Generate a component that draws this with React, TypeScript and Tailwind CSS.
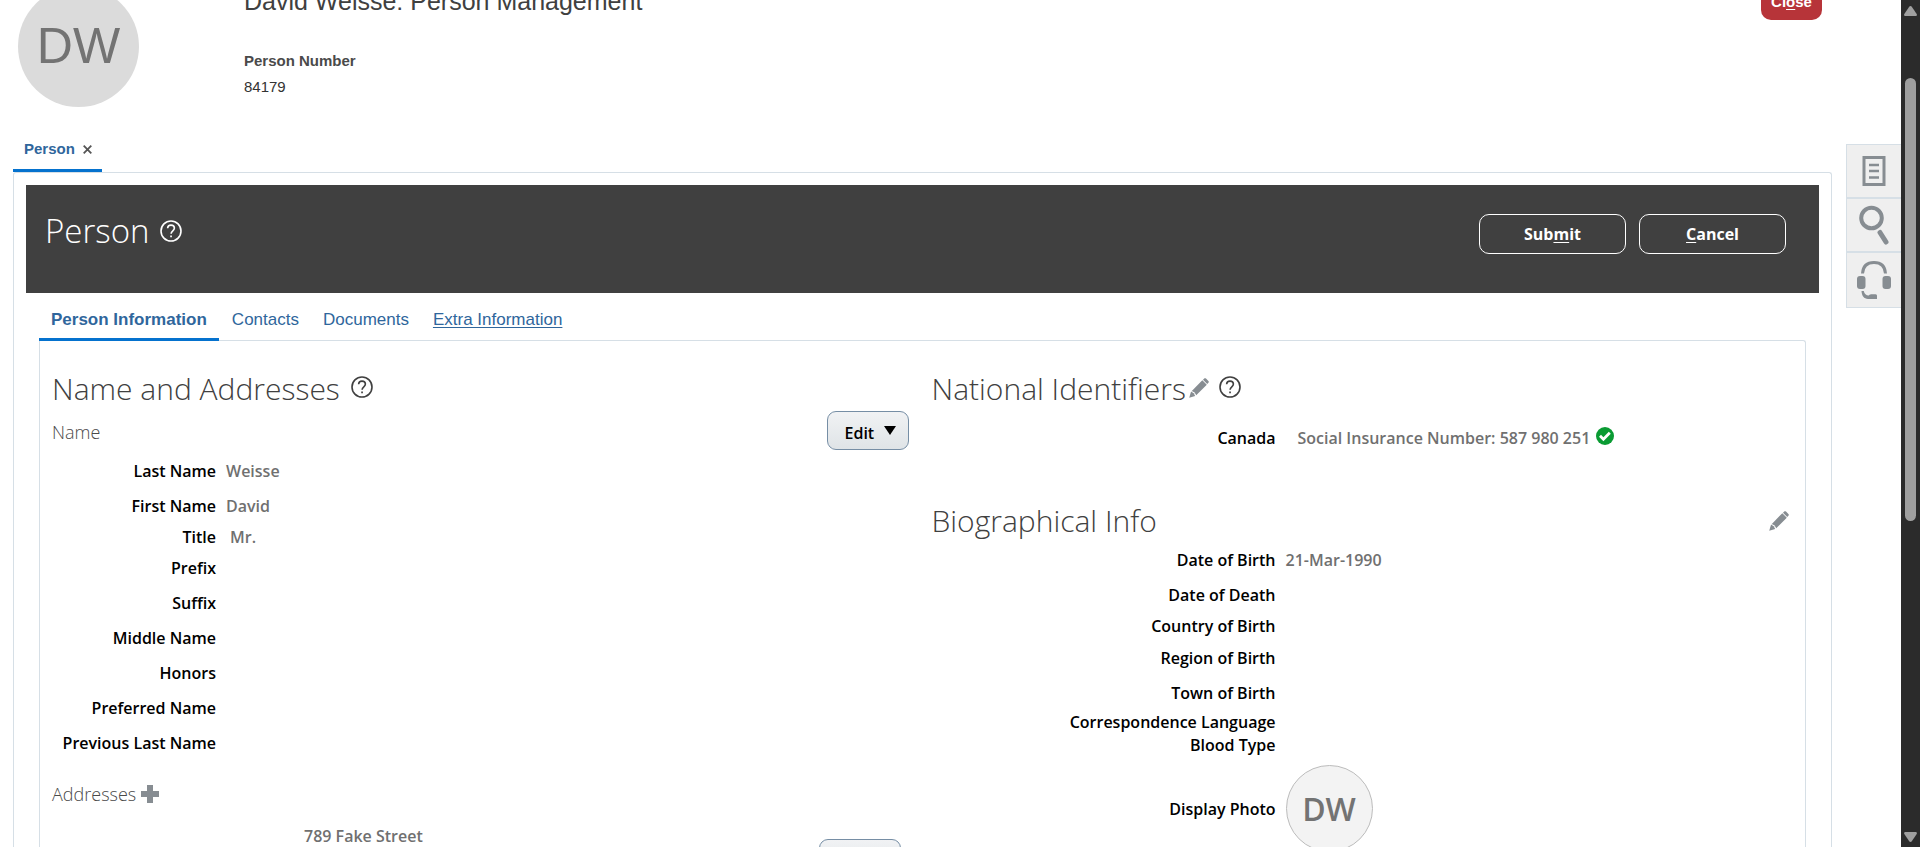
import type { ReactNode } from "react";

type Field = { label: string; value?: string; height: string; inset?: boolean };

const nameFields: Field[] = [
  { label: "Last Name", value: "Weisse", height: "h-[35px]" },
  { label: "First Name", value: "David", height: "h-[31px]" },
  { label: "Title", value: "Mr.", height: "h-[31px]", inset: true },
  { label: "Prefix", height: "h-[35px]" },
  { label: "Suffix", height: "h-[35px]" },
  { label: "Middle Name", height: "h-[35px]" },
  { label: "Honors", height: "h-[35px]" },
  { label: "Preferred Name", height: "h-[35px]" },
  { label: "Previous Last Name", height: "h-[35px]" },
];

const bioFields: Field[] = [
  { label: "Date of Birth", value: "21-Mar-1990", height: "h-[35px]" },
  { label: "Date of Death", height: "h-[31px]" },
  { label: "Country of Birth", height: "h-[32px]" },
  { label: "Region of Birth", height: "h-[35px]" },
  { label: "Town of Birth", height: "h-[29px]" },
  { label: "Correspondence Language", height: "h-[23px]" },
  { label: "Blood Type", height: "h-[31px]" },
];

function HelpIcon() {
  return (
    <svg viewBox="0 0 22 22" className="size-[22px]" fill="none" stroke="currentColor" strokeWidth="1.6" aria-hidden="true">
      <circle cx="11" cy="11" r="10" />
      <path d="M7.6 8.2C7.7 6.2 9.1 5.1 11 5.1s3.4 1.1 3.4 3c0 2.7-3.3 2.7-3.3 5.6" />
      <path d="M10.2 15.6h1.7v1.7h-1.7z" fill="currentColor" stroke="none" />
    </svg>
  );
}

function PencilIcon() {
  return (
    <svg viewBox="0 0 20 20" className="size-5" fill="#878d92" aria-hidden="true">
      <path d="M15.2.6c.6-.5 1.200-.5 1.800 0l2.400 2.400c.6.600.6 1.200 0 1.800l-1.200 1.200-4.200-4.200z" />
      <path d="M13.300 2.200l4.500 4.500L7.200 17.300l-1.500-2.900-2.900-1.500z" />
      <path d="M2.100 13.600l2.600 1.600 1.500 2.700L.2 19.800z" />
    </svg>
  );
}

function IconButton({ label, children }: { label: string; children: ReactNode }) {
  return (
    <button type="button" aria-label={label} className="block cursor-pointer self-start">
      {children}
    </button>
  );
}

function FieldRow({ field, labelWidth }: { field: Field; labelWidth: string }) {
  return (
    <div className={`flex gap-[10px] ${field.height}`}>
      <dt className={`shrink-0 text-right text-black ${labelWidth}`}>{field.label}</dt>
      <dd className={`text-[#707070] ${field.inset ? "pl-1" : ""}`}>{field.value}</dd>
    </div>
  );
}

function EditButton() {
  return (
    <button
      type="button"
      className="flex h-[39px] w-[82px] shrink-0 items-center gap-[10px] rounded-[9px] border border-[#768ea5] bg-linear-to-b from-[#f1f2f4] to-[#dfe4e7] pt-1 pl-[17px] font-semibold text-black"
    >
      Edit
      <svg viewBox="0 0 12 9" className="mb-1 h-[9px] w-3" aria-hidden="true">
        <path d="M0 0h12L6 9z" />
      </svg>
    </button>
  );
}

function Header() {
  return (
    <header className="-mt-4 flex h-[143px] pl-[18px]">
      <div className="mt-[2px] flex size-[121px] shrink-0 items-center justify-center rounded-full bg-[#dbdbdb] pb-[2px] text-[50px] leading-none text-[#737373]">
        DW
      </div>
      <div className="ml-[105px] flex-1">
        <h1 className="pt-px text-[25px] leading-8 text-[#404040]">David Weisse: Person Management</h1>
        <dl className="mt-[34px] text-[15px] leading-5">
          <dt className="font-bold text-[#4a4a4a]">Person Number</dt>
          <dd className="mt-[6px] text-[#333333]">84179</dd>
        </dl>
      </div>
      <button
        type="button"
        className="mr-[10px] h-9 w-[61px] rounded-[10px] bg-[#b73439] text-[15px] font-bold text-white"
      >
        Cl<span className="underline underline-offset-2">o</span>se
      </button>
    </header>
  );
}

function TitleBar() {
  const button = "h-10 w-[147px] rounded-[10px] border border-white text-[16px] font-bold text-white";
  return (
    <div className="flex h-[108px] justify-between bg-[#404040] pr-[33px] pl-[19px] font-['Open_Sans',sans-serif]">
      <div className="flex gap-[11px] pt-[23px] text-white">
        <h2 className="text-[33px] leading-[46px] font-light">Person</h2>
        <div className="pt-3">
          <IconButton label="Help">
            <HelpIcon />
          </IconButton>
        </div>
      </div>
      <div className="flex gap-[13px] pt-[29px]">
        <button type="button" className={button}>
          Sub<span className="underline underline-offset-2">m</span>it
        </button>
        <button type="button" className={button}>
          <span className="underline underline-offset-2">C</span>ancel
        </button>
      </div>
    </div>
  );
}

function SectionTitle({ children }: { children: ReactNode }) {
  return <h3 className="text-[30px] leading-[44px] font-light text-[#404040]">{children}</h3>;
}

function NameAndAddresses() {
  return (
    <section className="pr-[14px] pl-3">
      <div className="flex gap-[11px]">
        <SectionTitle>Name and Addresses</SectionTitle>
        <div className="pt-[9px] text-[#404040]">
          <IconButton label="Help">
            <HelpIcon />
          </IconButton>
        </div>
      </div>
      <div className="flex h-[49px] items-start justify-between">
        <h4 className="pt-[7px] text-[18px] leading-[28px] font-light text-[#4a4a4a]">Name</h4>
        <EditButton />
      </div>
      <dl>
        {nameFields.map((f) => (
          <FieldRow key={f.label} field={f} labelWidth="w-[164px]" />
        ))}
      </dl>
      <div className="mt-[13px] flex gap-[5px]">
        <h4 className="text-[18px] leading-[28px] font-light text-[#4a4a4a]">Addresses</h4>
        <div className="pt-[5px]">
          <IconButton label="Add address">
            <svg viewBox="0 0 18 18" className="size-[18px]" fill="#878d92" aria-hidden="true">
              <path d="M6 0h6v6h6v6h-6v6H6v-6H0V6h6z" />
            </svg>
          </IconButton>
        </div>
      </div>
      <div className="mt-[17px] flex items-start justify-between pr-2 pl-[252px]">
        <address className="text-[#707070] not-italic">789 Fake Street</address>
        <div className="pt-[14px]">
          <EditButton />
        </div>
      </div>
    </section>
  );
}

function NationalIdentifiers() {
  return (
    <section>
      <div className="flex">
        <SectionTitle>National Identifiers</SectionTitle>
        <div className="flex gap-[10px] pt-[9px] pl-[3px] text-[#404040]">
          <div className="pt-[2px]">
            <IconButton label="Edit national identifiers">
              <PencilIcon />
            </IconButton>
          </div>
          <IconButton label="Help">
            <HelpIcon />
          </IconButton>
        </div>
      </div>
      <dl className="mt-4 flex h-[72px]">
        <dt className="w-[344px] shrink-0 text-right text-black">Canada</dt>
        <dd className="flex gap-[6px] pl-[22px] text-[#707070]">
          Social Insurance Number: 587 980 251
          <svg viewBox="0 0 18 18" className="size-[18px]" role="img" aria-label="Valid">
            <circle cx="9" cy="9" r="9" fill="#0a9b33" />
            <path d="M4 8.800l3.400 3.400 6.400-6.400" fill="none" stroke="white" strokeWidth="2.800" />
          </svg>
        </dd>
      </dl>
    </section>
  );
}

function BiographicalInfo() {
  return (
    <section>
      <div className="flex h-[50px] justify-between">
        <SectionTitle>Biographical Info</SectionTitle>
        <div className="pt-3">
          <IconButton label="Edit biographical info">
            <PencilIcon />
          </IconButton>
        </div>
      </div>
      <dl>
        {bioFields.map((f) => (
          <FieldRow key={f.label} field={f} labelWidth="w-[344px]" />
        ))}
        <div className="flex items-center gap-[10px]">
          <dt className="w-[344px] shrink-0 text-right text-black">Display Photo</dt>
          <dd className="flex size-[87px] items-center justify-center rounded-full border border-[#bcbcbc] bg-[#f3f3f3] text-[32px] text-[#737373]">
            DW
          </dd>
        </div>
      </dl>
    </section>
  );
}

function PersonTabs() {
  const link = "px-[11px] pt-4 hover:underline";
  return (
    <nav className="flex h-[47px] gap-[2px] text-[17px] leading-[22px] text-[#2f669c]">
      <a href="#information" aria-current="page" className="-mb-px border-b-3 border-[#0572ce] px-3 pt-4 font-bold">
        Person Information
      </a>
      <a href="#contacts" className={link}>Contacts</a>
      <a href="#documents" className={link}>Documents</a>
      <a href="#extra" className="px-[11px] pt-4 underline underline-offset-2">Extra Information</a>
    </nav>
  );
}

function SideRail() {
  const cell = "flex h-[54px] w-full items-center justify-center";
  return (
    <aside className="mt-36 ml-[14px] h-fit w-[55px] shrink-0 divide-y-2 divide-[#d6dfe6] border border-r-0 border-[#d6dfe6] bg-[#efefef] text-[#878d92]">
      <button type="button" aria-label="Document" className={cell}>
        <svg viewBox="0 0 24 30" className="h-[30px] w-6" fill="none" stroke="currentColor" aria-hidden="true">
          <path d="M2 1.500h20v27H2z" strokeWidth="3" />
          <path d="M7 9h10M7 15h10M7 21.500h10" strokeWidth="2.600" />
        </svg>
      </button>
      <button type="button" aria-label="Search" className={cell}>
        <svg viewBox="0 0 30 40" className="h-10 w-[30px]" fill="none" stroke="currentColor" aria-hidden="true">
          <circle cx="12.500" cy="13" r="10.300" strokeWidth="4" />
          <path d="M21 27.500l6 9.500" strokeWidth="5" strokeLinecap="round" />
        </svg>
      </button>
      <button type="button" aria-label="Support" className={cell}>
        <svg viewBox="0 0 34 40" className="h-10 w-[34px]" fill="currentColor" aria-hidden="true">
          <path d="M5.500 13.500C6 6 10.500 2.500 17 2.500S28 6 28.500 13.500" fill="none" stroke="currentColor" strokeWidth="3" />
          <rect x="0" y="16" width="8.500" height="13" rx="3" />
          <rect x="25.500" y="16" width="8.500" height="13" rx="3" />
          <path d="M4.500 31h2.300c.6 3 2.200 4.300 5 4.500.8-1 2-1.200 3.200-1.200h3.500c1.500 0 1.500 1 1.500 2V39h-9C7 38.800 4.800 36 4.500 31z" />
        </svg>
      </button>
    </aside>
  );
}

function ScrollTrack() {
  return (
    <div className="flex w-[19px] shrink-0 flex-col items-center bg-[#2b2b2b]" aria-hidden="true">
      <svg viewBox="0 0 13 10" className="mt-[6px] h-[10px] w-[13px]" fill="#9f9f9f">
        <path d="M6.500 0c.6 0 1 .3 1.300.7l4.900 7.300c.5.900 0 2-1 2H1.300c-1 0-1.500-1.100-1-2L5.200.7C5.500.3 5.900 0 6.500 0z" />
      </svg>
      <div className="mt-[62px] h-[443px] w-[11px] rounded-full bg-[#9f9f9f]" />
      <svg viewBox="0 0 13 10" className="mt-auto mb-[5px] h-[10px] w-[13px] rotate-180" fill="#9f9f9f">
        <path d="M6.500 0c.6 0 1 .3 1.300.7l4.900 7.300c.5.900 0 2-1 2H1.300c-1 0-1.500-1.100-1-2L5.200.7C5.500.3 5.900 0 6.500 0z" />
      </svg>
    </div>
  );
}

export default function App() {
  return (
    <div className="flex h-screen overflow-hidden bg-white font-['Liberation_Sans',sans-serif]">
      <main className="min-w-0 flex-1">
        <Header />
        <div className="pl-[13px]">
          <div className="flex h-[45px]">
            <div className="flex items-start gap-2 border-b-3 border-[#0572ce] pt-3 pr-[10px] pl-[11px] text-[15px] leading-5 font-bold text-[#2f669c]">
              <a href="#person">Person</a>
              <div className="pt-[6px]">
                <IconButton label="Close tab">
                  <svg viewBox="0 0 9 9" className="size-[9px]" stroke="#555" strokeWidth="1.800" aria-hidden="true">
                    <path d="M.7.7l7.600 7.600M8.300.7L.7 8.300" />
                  </svg>
                </IconButton>
              </div>
            </div>
          </div>
          <div className="rounded-t-[3px] border border-b-0 border-[#d6dfe6] px-3 pt-3">
            <TitleBar />
            <div className="px-[13px]">
              <PersonTabs />
              <div className="grid grid-cols-2 rounded-tr-[3px] border border-b-0 border-[#d6dfe6] pt-[26px] font-['Open_Sans',sans-serif] text-[16px] leading-[22px] font-semibold">
                <NameAndAddresses />
                <div className="pr-4 pl-[9px]">
                  <NationalIdentifiers />
                  <BiographicalInfo />
                </div>
              </div>
            </div>
          </div>
        </div>
      </main>
      <SideRail />
      <ScrollTrack />
    </div>
  );
}
